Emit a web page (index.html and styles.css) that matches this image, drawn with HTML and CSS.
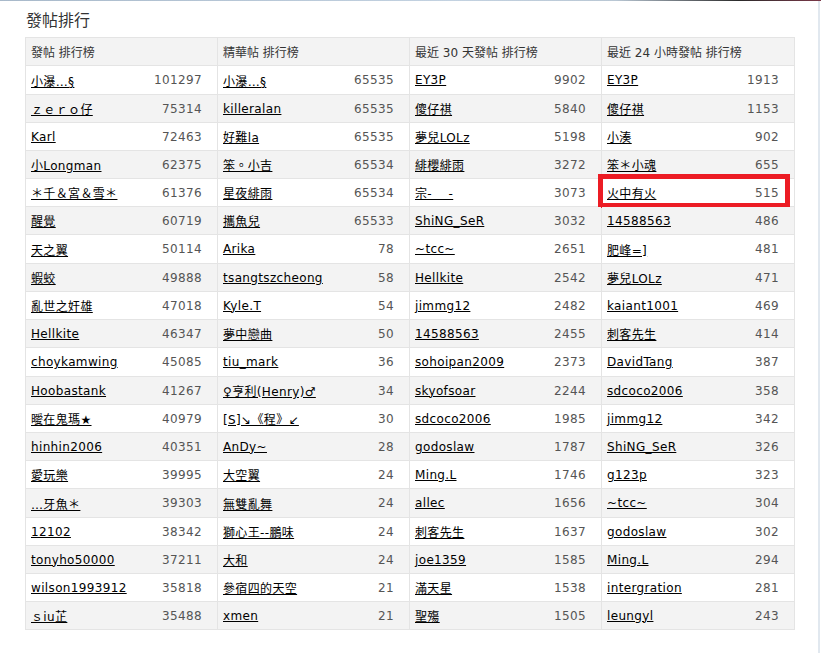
FILE: index.html
```html
<!DOCTYPE html>
<html lang="zh-Hant">
<head>
<meta charset="utf-8">
<title>發帖排行</title>
<link rel="stylesheet" href="styles.css">
</head>
<body>
<div class="topbar"></div>
<div class="page">
  <h2 class="title">發帖排行</h2>
  <div class="board">
    <div class="cell head">發帖 排行榜</div>
    <div class="cell head">精華帖 排行榜</div>
    <div class="cell head">最近 30 天發帖 排行榜</div>
    <div class="cell head">最近 24 小時發帖 排行榜</div>

    <div class="cell"><a href="#">小瀑…§</a><span class="num">101297</span></div>
    <div class="cell"><a href="#">小瀑…§</a><span class="num">65535</span></div>
    <div class="cell"><a href="#">EY3P</a><span class="num">9902</span></div>
    <div class="cell"><a href="#">EY3P</a><span class="num">1913</span></div>

    <div class="cell alt"><a href="#">ｚｅｒｏ仔</a><span class="num">75314</span></div>
    <div class="cell alt"><a href="#">killeralan</a><span class="num">65535</span></div>
    <div class="cell alt"><a href="#">傻仔祺</a><span class="num">5840</span></div>
    <div class="cell alt"><a href="#">傻仔祺</a><span class="num">1153</span></div>

    <div class="cell"><a href="#">Karl</a><span class="num">72463</span></div>
    <div class="cell"><a href="#">好難la</a><span class="num">65535</span></div>
    <div class="cell"><a href="#">夢兒LOLz</a><span class="num">5198</span></div>
    <div class="cell"><a href="#">小湊</a><span class="num">902</span></div>

    <div class="cell alt"><a href="#">小Longman</a><span class="num">62375</span></div>
    <div class="cell alt"><a href="#">笨。小吉</a><span class="num">65534</span></div>
    <div class="cell alt"><a href="#">緋櫻緋雨</a><span class="num">3272</span></div>
    <div class="cell alt"><a href="#">笨＊小魂</a><span class="num">655</span></div>

    <div class="cell"><a href="#">＊千＆宮＆雪＊</a><span class="num">61376</span></div>
    <div class="cell"><a href="#">星夜緋雨</a><span class="num">65534</span></div>
    <div class="cell"><a href="#">宗-　 -</a><span class="num">3073</span></div>
    <div class="cell marked"><a href="#">火中有火</a><span class="num">515</span><span class="highlight"></span></div>

    <div class="cell alt"><a href="#">醒覺</a><span class="num">60719</span></div>
    <div class="cell alt"><a href="#">攜魚兒</a><span class="num">65533</span></div>
    <div class="cell alt"><a href="#">ShiNG_SeR</a><span class="num">3032</span></div>
    <div class="cell alt"><a href="#">14588563</a><span class="num">486</span></div>

    <div class="cell"><a href="#">天之翼</a><span class="num">50114</span></div>
    <div class="cell"><a href="#">Arika</a><span class="num">78</span></div>
    <div class="cell"><a href="#">~tcc~</a><span class="num">2651</span></div>
    <div class="cell"><a href="#">肥峰=]</a><span class="num">481</span></div>

    <div class="cell alt"><a href="#">蝦蛟</a><span class="num">49888</span></div>
    <div class="cell alt"><a href="#">tsangtszcheong</a><span class="num">58</span></div>
    <div class="cell alt"><a href="#">Hellkite</a><span class="num">2542</span></div>
    <div class="cell alt"><a href="#">夢兒LOLz</a><span class="num">471</span></div>

    <div class="cell"><a href="#">亂世之奸雄</a><span class="num">47018</span></div>
    <div class="cell"><a href="#">Kyle.T</a><span class="num">54</span></div>
    <div class="cell"><a href="#">jimmg12</a><span class="num">2482</span></div>
    <div class="cell"><a href="#">kaiant1001</a><span class="num">469</span></div>

    <div class="cell alt"><a href="#">Hellkite</a><span class="num">46347</span></div>
    <div class="cell alt"><a href="#">夢中戀曲</a><span class="num">50</span></div>
    <div class="cell alt"><a href="#">14588563</a><span class="num">2455</span></div>
    <div class="cell alt"><a href="#">刺客先生</a><span class="num">414</span></div>

    <div class="cell"><a href="#">choykamwing</a><span class="num">45085</span></div>
    <div class="cell"><a href="#">tiu_mark</a><span class="num">36</span></div>
    <div class="cell"><a href="#">sohoipan2009</a><span class="num">2373</span></div>
    <div class="cell"><a href="#">DavidTang</a><span class="num">387</span></div>

    <div class="cell alt"><a href="#">Hoobastank</a><span class="num">41267</span></div>
    <div class="cell alt"><a href="#">♀亨利(Henry)♂</a><span class="num">34</span></div>
    <div class="cell alt"><a href="#">skyofsoar</a><span class="num">2244</span></div>
    <div class="cell alt"><a href="#">sdcoco2006</a><span class="num">358</span></div>

    <div class="cell"><a href="#">曖在鬼瑪★</a><span class="num">40979</span></div>
    <div class="cell"><a href="#">[S]↘《程》↙</a><span class="num">30</span></div>
    <div class="cell"><a href="#">sdcoco2006</a><span class="num">1985</span></div>
    <div class="cell"><a href="#">jimmg12</a><span class="num">342</span></div>

    <div class="cell alt"><a href="#">hinhin2006</a><span class="num">40351</span></div>
    <div class="cell alt"><a href="#">AnDy~</a><span class="num">28</span></div>
    <div class="cell alt"><a href="#">godoslaw</a><span class="num">1787</span></div>
    <div class="cell alt"><a href="#">ShiNG_SeR</a><span class="num">326</span></div>

    <div class="cell"><a href="#">愛玩樂</a><span class="num">39995</span></div>
    <div class="cell"><a href="#">大空翼</a><span class="num">24</span></div>
    <div class="cell"><a href="#">Ming.L</a><span class="num">1746</span></div>
    <div class="cell"><a href="#">g123p</a><span class="num">323</span></div>

    <div class="cell alt"><a href="#">…牙魚＊</a><span class="num">39303</span></div>
    <div class="cell alt"><a href="#">無雙亂舞</a><span class="num">24</span></div>
    <div class="cell alt"><a href="#">allec</a><span class="num">1656</span></div>
    <div class="cell alt"><a href="#">~tcc~</a><span class="num">304</span></div>

    <div class="cell"><a href="#">12102</a><span class="num">38342</span></div>
    <div class="cell"><a href="#">獅心王--鵬味</a><span class="num">24</span></div>
    <div class="cell"><a href="#">刺客先生</a><span class="num">1637</span></div>
    <div class="cell"><a href="#">godoslaw</a><span class="num">302</span></div>

    <div class="cell alt"><a href="#">tonyho50000</a><span class="num">37211</span></div>
    <div class="cell alt"><a href="#">大和</a><span class="num">24</span></div>
    <div class="cell alt"><a href="#">joe1359</a><span class="num">1585</span></div>
    <div class="cell alt"><a href="#">Ming.L</a><span class="num">294</span></div>

    <div class="cell"><a href="#">wilson1993912</a><span class="num">35818</span></div>
    <div class="cell"><a href="#">參宿四的天空</a><span class="num">21</span></div>
    <div class="cell"><a href="#">滿天星</a><span class="num">1538</span></div>
    <div class="cell"><a href="#">intergration</a><span class="num">281</span></div>

    <div class="cell alt"><a href="#">ｓiu芷</a><span class="num">35488</span></div>
    <div class="cell alt"><a href="#">xmen</a><span class="num">21</span></div>
    <div class="cell alt"><a href="#">聖殤</a><span class="num">1505</span></div>
    <div class="cell alt"><a href="#">leungyl</a><span class="num">243</span></div>
  </div>
</div>
</body>
</html>
```

FILE: styles.css
```css
html, body {
  margin: 0;
  padding: 0;
  background: #ffffff;
}

body {
  font-family: "DejaVu Sans", "Noto Sans CJK TC", sans-serif;
  font-size: 12px;
  color: #333333;
}

.topbar {
  height: 1px;
  background: linear-gradient(to right, #a8b9ca 0%, #c3d2e1 55%, #b9c7d4 75%, #2a2a2a 90%, #7a3848 100%);
}

.page {
  width: 793px;
  height: 652px;
  padding-left: 25px;
  border-right: 2px solid #e1e8ef;
  box-sizing: content-box;
}

.title {
  margin: 0;
  height: 36px;
  line-height: 36px;
  padding-left: 1px;
  font-size: 16px;
  font-weight: normal;
  color: #333333;
  font-family: "Noto Sans CJK TC", "DejaVu Sans", sans-serif;
}

.board {
  display: grid;
  grid-template-columns: 191px 191px 191px 192px;
  grid-template-rows: 27px 28px 27px 27px 27px 27px 27px 28px 27px 27px 27px 28px 27px 27px 27px 27px 28px 27px 27px 27px 27px;
  gap: 1px;
  width: 768px;
  background: #e4e4e4;
  border: 1px solid #e4e4e4;
}

.cell {
  position: relative;
  display: flex;
  align-items: center;
  justify-content: space-between;
  padding: 0 15px 0 5px;
  background: #ffffff;
  white-space: nowrap;
}

.cell.alt,
.cell.head {
  background: #f3f3f3;
}

.cell.head {
  color: #333333;
}

.cell a {
  color: #000000;
  text-decoration: underline;
  letter-spacing: 0.35px;
}

.num {
  color: #555555;
  letter-spacing: 0.35px;
}

.highlight {
  position: absolute;
  top: -5px;
  bottom: -2px;
  left: -4px;
  right: 4px;
  border: 5px solid #ec1c24;
  pointer-events: none;
}
```
